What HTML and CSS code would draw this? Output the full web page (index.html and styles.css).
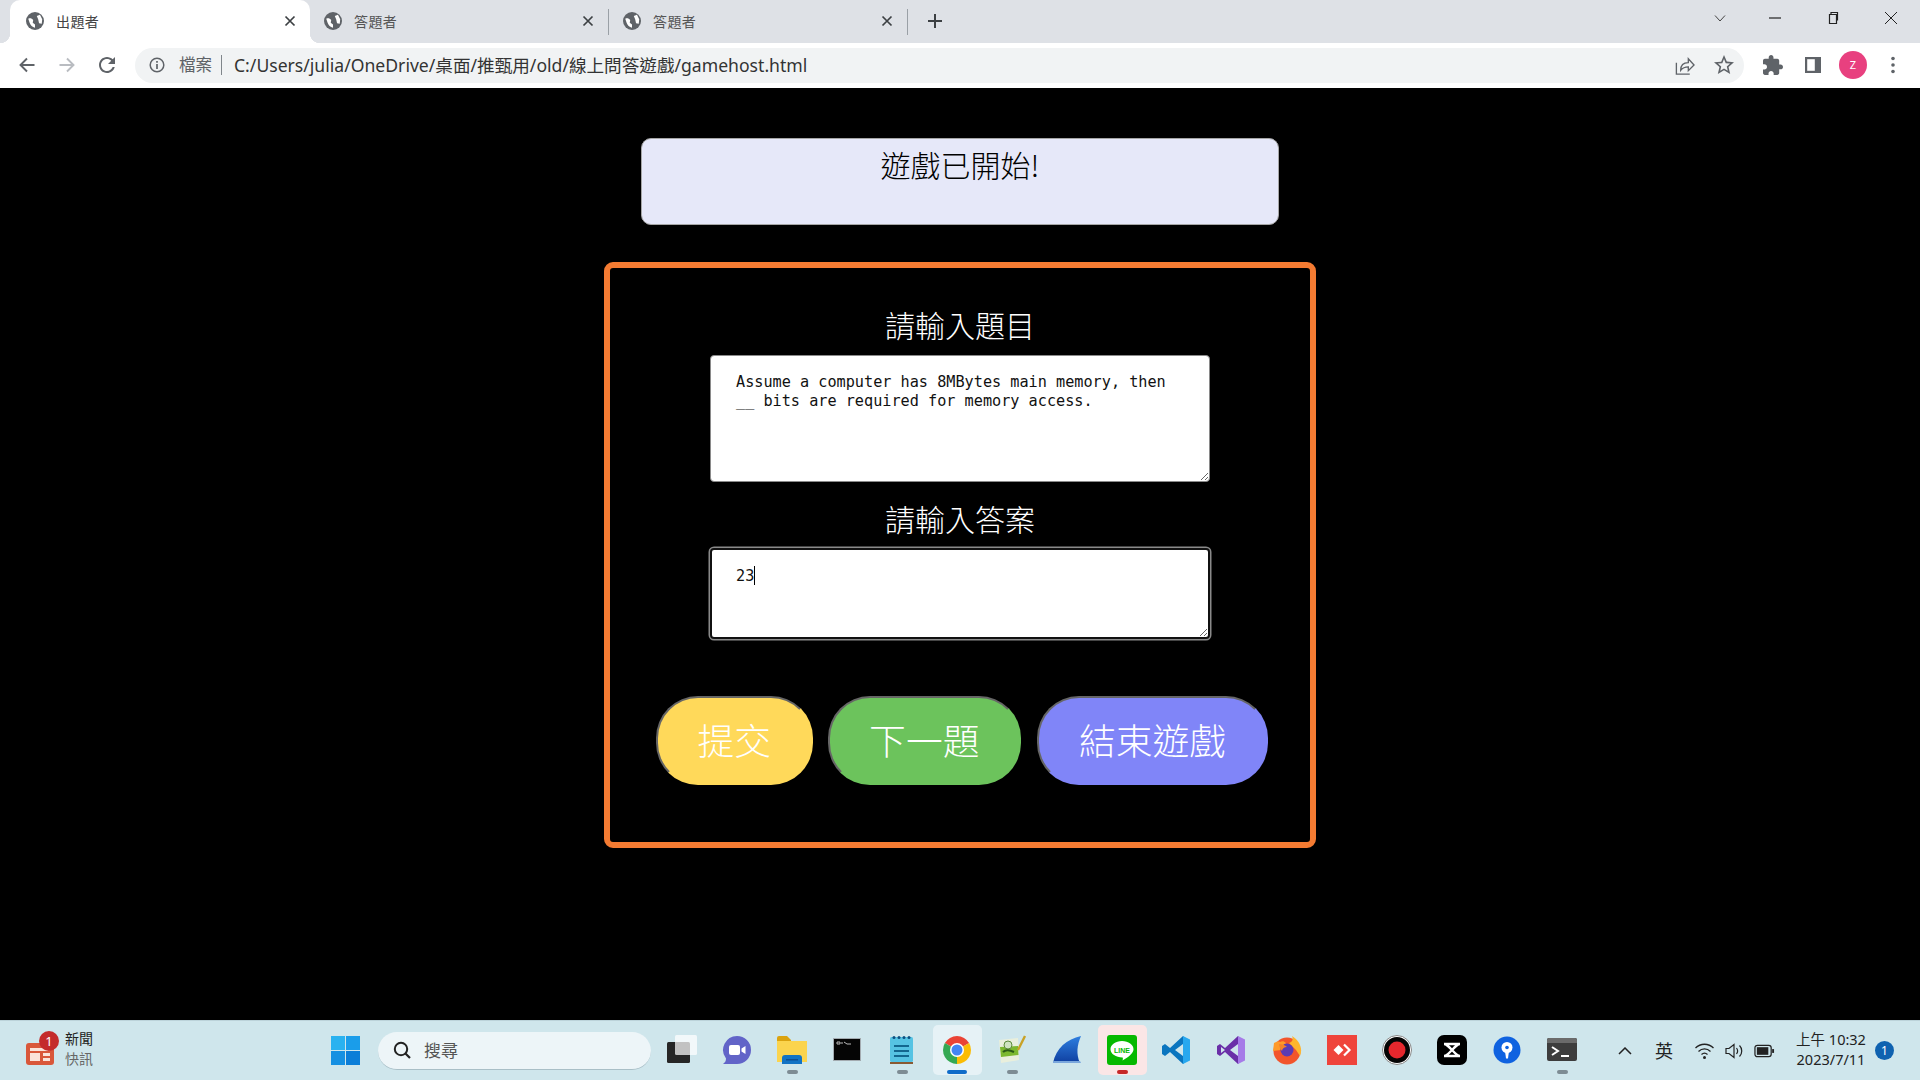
FILE: index.html
```html
<!DOCTYPE html>
<html lang="zh-Hant">
<head>
  <meta charset="UTF-8" />
  <title>出題者</title>
  <link rel="stylesheet" href="styles.css">
</head>
<body>
  <svg class="defs" width="0" height="0">
    <symbol id="globe" viewBox="2 2 20 20">
      <circle cx="12" cy="12" r="10" fill="#5f6368"/>
      <path fill="#fff" d="M4.500 9.500c2-1 4-.5 5.500 1.500l-.5 3 2.500 2v3.500c-3-.5-5-3-6-5.500zM14 6.500l3.500-1.500 2.500 5-.5 5-3-.5-1-4.500z"/>
    </symbol>
    <symbol id="close" viewBox="0 0 12 12">
      <path d="M1.500 1.500l9 9M10.500 1.500l-9 9" fill="none" stroke="#3c4043" stroke-width="1.700"/>
    </symbol>
  </svg>

  <div class="tabstrip">
    <div class="tab active">
      <svg class="favicon"><use href="#globe"/></svg>
      <span class="tab-title">出題者</span>
      <svg class="tab-close"><use href="#close"/></svg>
    </div>
    <div class="tab">
      <svg class="favicon"><use href="#globe"/></svg>
      <span class="tab-title">答題者</span>
      <svg class="tab-close"><use href="#close"/></svg>
    </div>
    <div class="tab-sep"></div>
    <div class="tab">
      <svg class="favicon"><use href="#globe"/></svg>
      <span class="tab-title">答題者</span>
      <svg class="tab-close"><use href="#close"/></svg>
    </div>
    <div class="tab-sep"></div>
    <svg class="new-tab" viewBox="0 0 16 16"><path d="M8 1v14M1 8h14" stroke="#3c4043" stroke-width="2"/></svg>
    <div class="window-controls">
      <div class="win-btn chevron-btn"><svg viewBox="0 0 14 14"><path d="M2 4.500l5 5.500 5-5.500" fill="none" stroke="#444" stroke-width="1"/></svg></div>
      <div class="win-btn"><svg viewBox="0 0 14 14"><path d="M1 7h12" stroke="#222" stroke-width="1.200"/></svg></div>
      <div class="win-btn"><svg viewBox="0 0 14 14"><path d="M3.500 3.500h7v9h-7zM5 3.500V1.500h6.500v8" fill="none" stroke="#222" stroke-width="1.200"/></svg></div>
      <div class="win-btn"><svg viewBox="0 0 14 14"><path d="M1 1l12 12M13 1L1 13" stroke="#222" stroke-width="1"/></svg></div>
    </div>
  </div>

  <div class="toolbar">
    <div class="tool-btn"><svg viewBox="0 0 20 20"><path d="M17.500 10H3.500M10 3.500L3.500 10l6.500 6.500" fill="none" stroke="#5f6368" stroke-width="1.900"/></svg></div>
    <div class="tool-btn"><svg viewBox="0 0 20 20"><path d="M2.500 10h14M10 3.500l6.500 6.500-6.500 6.500" fill="none" stroke="#b9bcc1" stroke-width="1.900"/></svg></div>
    <div class="tool-btn"><svg viewBox="2 2 20 20"><path fill="#5f6368" d="M17.650 6.350C16.200 4.900 14.210 4 12 4c-4.420 0-7.990 3.580-7.990 8s3.570 8 7.990 8c3.730 0 6.840-2.550 7.730-6h-2.080c-.82 2.330-3.040 4-5.650 4-3.310 0-6-2.690-6-6s2.690-6 6-6c1.660 0 3.140.69 4.220 1.780L13 11h7V4l-2.350 2.350z"/></svg></div>
    <div class="address">
      <svg class="info" viewBox="0 0 16 16"><circle cx="8" cy="8" r="6.800" fill="none" stroke="#5f6368" stroke-width="1.500"/><path d="M8 7v5M8 4v1.800" stroke="#5f6368" stroke-width="1.700"/></svg>
      <span class="addr-label">檔案</span>
      <span class="addr-sep"></span>
      <span class="addr-url">C:/Users/julia/OneDrive/桌面/推甄用/old/線上問答遊戲/gamehost.html</span>
      <svg class="addr-icon share" viewBox="0 0 22 22"><path d="M2.500 8v12h14M7 16c0-5 3-8 8-8V4l6 6.500-6 6v-4c-3 0-6 1-8 3.500z" fill="none" stroke="#5f6368" stroke-width="1.400"/></svg>
      <svg class="addr-icon" viewBox="2 2 20 20"><path fill="#5f6368" d="M22 9.240l-7.190-.62L12 2 9.190 8.630 2 9.240l5.460 4.730L5.820 21 12 17.270 18.180 21l-1.630-7.030L22 9.240zM12 15.400l-3.760 2.270 1-4.280-3.320-2.880 4.380-.38L12 6.100l1.710 4.040 4.380.38-3.320 2.880 1 4.280L12 15.400z"/></svg>
    </div>
    <div class="toolbar-right">
      <div class="tool-btn"><svg viewBox="2 1 21 21"><path fill="#5f6368" d="M20.500 11H19V7c0-1.100-.9-2-2-2h-4V3.500C13 2.120 11.880 1 10.500 1S8 2.120 8 3.500V5H4c-1.100 0-1.990.9-1.990 2v3.800H3.500c1.490 0 2.700 1.210 2.700 2.700s-1.210 2.700-2.700 2.700H2V20c0 1.100.9 2 2 2h3.800v-1.500c0-1.490 1.210-2.700 2.700-2.700 1.490 0 2.700 1.210 2.700 2.700V22H17c1.100 0 2-.9 2-2v-4h1.500c1.380 0 2.500-1.120 2.500-2.500S21.880 11 20.500 11z"/></svg></div>
      <div class="tool-btn"><svg viewBox="0 0 20 20"><path fill="#5f6368" d="M2 2h16v16H2z"/><path fill="#fff" d="M4.200 4.200h7.600v11.600H4.200z"/></svg></div>
      <div class="tool-btn"><span class="avatar">Z</span></div>
      <div class="tool-btn"><svg viewBox="0 0 20 20"><circle cx="10" cy="3.500" r="1.800" fill="#5f6368"/><circle cx="10" cy="10" r="1.800" fill="#5f6368"/><circle cx="10" cy="16.500" r="1.800" fill="#5f6368"/></svg></div>
    </div>
  </div>

  <main class="page">
    <div class="banner">遊戲已開始!</div>
    <div class="game-box">
      <label class="field-label" for="question">請輸入題目</label>
      <textarea id="question" class="question">Assume a computer has 8MBytes main memory, then __ bits are required for memory access.</textarea>
      <label class="field-label second" for="answer">請輸入答案</label>
      <div class="answer-wrap">
        <textarea id="answer" class="answer">23</textarea>
        <span class="caret"></span>
      </div>
      <div class="button-row">
        <button class="btn yellow">提交</button>
        <button class="btn green">下一題</button>
        <button class="btn purple">結束遊戲</button>
      </div>
    </div>
  </main>

  <footer class="taskbar">
    <div class="news">
      <div class="news-icon">
        <svg viewBox="0 0 28 22"><rect y="0" width="28" height="22" rx="3" fill="#d9573a"/><path d="M4 5h20v3H4zM4 10h10v8H4zM17 10h7v3h-7zM17 15h7v3h-7z" fill="#fbe3da"/></svg>
        <span class="news-badge">1</span>
      </div>
      <div class="news-text"><span>新聞</span><span class="muted">快訊</span></div>
    </div>
    <svg class="start" viewBox="0 0 29 29"><path fill="#29b2f0" d="M0 0h14v14H0z"/><path fill="#1a9dea" d="M15 0h14v14H15z"/><path fill="#1590e2" d="M0 15h14v14H0z"/><path fill="#0b7ed8" d="M15 15h14v14H15z"/></svg>
    <div class="search">
      <svg viewBox="0 0 18 18"><circle cx="8" cy="8" r="6.200" fill="none" stroke="#222" stroke-width="2"/><path d="M12.500 12.500l4.500 4.500" stroke="#222" stroke-width="2.200"/></svg>
      <span>搜尋</span>
    </div>
    <div class="apps">
      <div class="app"><svg viewBox="0 0 30 30"><rect x="0" y="7" width="23" height="21" rx="1.500" fill="#262626"/><rect x="8" y="0" width="22" height="20" rx="1.500" fill="#fff" opacity=".72"/></svg></div>
      <div class="app"><svg viewBox="0 0 30 30"><path fill="#6264c8" d="M15 1a14 14 0 0 1 0 28H1c2-1.500 3-3 3-5.500A14 14 0 0 1 15 1z"/><rect x="7" y="10" width="11" height="10" rx="2" fill="#fff"/><path d="M19.500 13.500l4-2.500v8l-4-2.500z" fill="#fff"/></svg></div>
      <div class="app"><svg viewBox="0 0 30 30"><path fill="#dba30f" d="M0 3a2 2 0 0 1 2-2h8l4 4v5H0z"/><path fill="#fbd44e" d="M0 6h30v21H0z"/><path fill="#1273c4" d="M5 23a3 3 0 0 1 3-3h14a3 3 0 0 1 3 3v6H5z"/><path fill="#0d4f94" d="M9 24h12v1.500H9z"/></svg></div>
      <div class="app"><svg viewBox="0 0 30 30"><rect x="1" y="3" width="28" height="23" fill="#a3abb0"/><rect x="2" y="4" width="26" height="21" fill="#050505"/><path d="M5 7h3v2H5zM9 8h2M12 7l3 2h4" stroke="#bbb" stroke-width="1" fill="none"/></svg></div>
      <div class="app"><svg viewBox="0 0 30 30"><rect x="3" y="2" width="23" height="25" rx="1.500" fill="#56c3e3"/><path d="M3 27h23v2H3z" fill="#8a5a33"/><path d="M7 10h15v2H7zM7 15h15v2H7zM7 20h15v2H7z" fill="#13678f"/><g fill="#0d4f80"><circle cx="7" cy="2.500" r="1.500"/><circle cx="12" cy="2.500" r="1.500"/><circle cx="17" cy="2.500" r="1.500"/><circle cx="22" cy="2.500" r="1.500"/></g></svg></div>
      <div class="app tile chrome"><svg viewBox="0 0 30 30"><path fill="#ea4335" d="M2.880 8A14 14 0 0 1 27.120 8L15 15z"/><path fill="#fbbc04" d="M27.120 8A14 14 0 0 1 15 29l0-14z"/><path fill="#34a853" d="M15 29A14 14 0 0 1 2.880 8L15 15z"/><circle cx="15" cy="15" r="7" fill="#fff"/><circle cx="15" cy="15" r="5.500" fill="#4285f4"/></svg></div>
      <div class="app"><svg viewBox="0 0 30 30"><path d="M2 5l19-2 1 22-18 3z" fill="#e9efdc"/><path d="M3 12l18-1 .5 9-17.500 2z" fill="#7cb82f"/><circle cx="11" cy="10" r="4" fill="#cfe3c0" stroke="#5c8a3a" stroke-width="1"/><path d="M6 17c3-3 7-2 11 0" stroke="#2b5a15" stroke-width="2" fill="none"/><path d="M28 1l-7 14" stroke="#c9a227" stroke-width="2.400"/></svg></div>
      <div class="app"><svg viewBox="0 0 30 30"><defs><linearGradient id="fin" x1="0" y1="0" x2="0" y2="1"><stop offset="0" stop-color="#2f7fe0"/><stop offset="1" stop-color="#0f3fa0"/></linearGradient></defs><path fill="url(#fin)" d="M29 1C15 4 4 13 1 28h27c-4-9-3-18 1-27z"/><path fill="#7ba7dc" d="M1 26h27l1 2H1z"/></svg></div>
      <div class="app tile line"><svg viewBox="0 0 30 30"><rect width="30" height="30" rx="3" fill="#06b900"/><path fill="#fff" d="M15 6c6.500 0 11.500 3.700 11.500 8.300 0 4-5.500 8.200-11 11.200.5-1.500.5-2.800 0-3C9 22.400 3.500 19 3.500 14.300 3.500 9.700 8.500 6 15 6z"/><text class="line-text" x="15" y="17.500" text-anchor="middle">LINE</text></svg></div>
      <div class="app"><svg viewBox="0 0 30 30"><path fill="#0a75bf" d="M21 1L8 13 3 9l-3 2v8l3 2 5-4 13 12 3-3V5z M21 9v12l-8-6z" fill-rule="evenodd"/><path fill="#28a8ef" d="M21 1l7 3.500v21L21 29z"/></svg></div>
      <div class="app"><svg viewBox="0 0 30 30"><path fill="#6a2fa8" d="M21 1L8 13 3 9l-3 2v8l3 2 5-4 13 12 3-3V5z M21 9v12l-8-6zM4 12l4 3-4 3z" fill-rule="evenodd"/><path fill="#a67be8" d="M21 1l7 3.500v21L21 29z"/></svg></div>
      <div class="app"><svg viewBox="0 0 30 30"><circle cx="15" cy="16" r="13.500" fill="#f2552c"/><path fill="#ffb52e" d="M28 21c3-7 0-15-8-20 2 5-1 6-3 7l7 7z"/><path fill="#ff9a2a" d="M2 8c2-1 4-2 6-1 2-1 4-1 6 1l-5 7-8 1z"/><circle cx="15" cy="15" r="6.500" fill="#5b3bb5"/><path fill="#f5822a" d="M7 9c3 0 6 1 8 3-3 0-5 2-5 4-2-2-3-5-3-7z"/></svg></div>
      <div class="app"><svg viewBox="0 0 30 30"><rect width="30" height="30" fill="#ef443b"/><path fill="#fff" d="M11.500 10l5 5-5 5-5-5z"/><path fill="none" stroke="#fff" stroke-width="2.200" d="M17 9.500l5.500 5.500-5.500 5.500"/></svg></div>
      <div class="app"><svg viewBox="0 0 30 30"><circle cx="15" cy="15" r="14.500" fill="#fff" stroke="#888" stroke-width="1"/><circle cx="15" cy="15" r="13" fill="#050505"/><circle cx="15" cy="15" r="8.500" fill="#e5272d"/></svg></div>
      <div class="app"><svg viewBox="0 0 30 30"><rect width="30" height="30" rx="7" fill="#000"/><path d="M7 9h16M7 21h16M7 9c5 0 11 12 16 12M23 9C18 9 12 21 7 21" fill="none" stroke="#fff" stroke-width="2.400"/></svg></div>
      <div class="app"><svg viewBox="0 0 30 30"><circle cx="15" cy="15" r="13.500" fill="#0f62e0"/><circle cx="15" cy="12.500" r="5.500" fill="#fff"/><path d="M13 16h4l-1 7.500h-2z" fill="#fff"/><circle cx="15" cy="12.500" r="1.800" fill="#0f62e0"/></svg></div>
      <div class="app"><svg viewBox="0 0 30 26"><rect width="30" height="23" y="1" rx="2" fill="#3d3d3d"/><path d="M0 3a2 2 0 0 1 2-2h26a2 2 0 0 1 2 2v3H0z" fill="#6b6b6b"/><path d="M5 10l6 4-6 4" fill="none" stroke="#fff" stroke-width="2"/><path d="M14 18h8v2h-8z" fill="#fff"/></svg></div>
    </div>
    <div class="tray">
      <svg class="tray-chevron" viewBox="0 0 14 8"><path d="M1 7l6-6 6 6" fill="none" stroke="#222" stroke-width="1.500"/></svg>
      <span class="ime">英</span>
      <svg class="tray-icon" viewBox="0 0 20 18"><path d="M1 6c5-5 13-5 18 0M4 9.500c3.500-3.500 8.500-3.500 12 0M7 12.500c2-1.800 4-1.800 6 0" fill="none" stroke="#222" stroke-width="1.300"/><circle cx="10" cy="15.500" r="1.500" fill="#222"/></svg>
      <svg class="tray-icon" viewBox="0 0 20 18"><path d="M1.500 6.500h3l5-4v13l-5-4h-3z" fill="none" stroke="#222" stroke-width="1.200"/><path d="M12 6c1.500 2 1.500 4 0 6M15 3.500c3 3 3 8 0 11" fill="none" stroke="#222" stroke-width="1.200"/></svg>
      <svg class="tray-icon" viewBox="0 0 22 14"><rect x="1" y="1" width="17" height="12" rx="2.500" fill="none" stroke="#222" stroke-width="1.300"/><rect x="3" y="3" width="12" height="8" fill="#222"/><path d="M19 5h2v4h-2z" fill="#222"/></svg>
      <div class="clock"><span>上午 10:32</span><span>2023/7/11</span></div>
      <span class="notify">1</span>
    </div>
  </footer>
</body>
</html>
```

FILE: styles.css
```css
* {
  box-sizing: border-box;
}
body {
  margin: 0;
  width: 1920px;
  height: 1080px;
  display: flex;
  flex-direction: column;
  overflow: hidden;
  background: #000;
  font-family: "Noto Sans", "Noto Sans CJK TC", sans-serif;
}
.defs {
  position: absolute;
}

/* browser tabs */
.tabstrip {
  height: 43px;
  flex: none;
  display: flex;
  align-items: center;
  padding-left: 10px;
  background: #dee1e6;
}
.tab {
  width: 298px;
  height: 43px;
  flex: none;
  display: flex;
  align-items: center;
  gap: 12px;
  padding: 0 14px 2px 14px;
  color: #555;
  font-size: 14px;
}
.tab.active {
  position: relative;
  width: 300px;
  padding-left: 16px;
  padding-right: 14px;
  background: #fff;
  border-radius: 10px 10px 0 0;
  color: #444;
}
.tab.active::before,
.tab.active::after {
  content: "";
  position: absolute;
  bottom: 0;
  width: 10px;
  height: 10px;
}
.tab.active::before {
  left: -10px;
  background: radial-gradient(circle at 0 0, transparent 10px, #fff 10.500px);
}
.tab.active::after {
  right: -10px;
  background: radial-gradient(circle at 100% 0, transparent 10px, #fff 10.500px);
}
.favicon {
  width: 18px;
  height: 18px;
  flex: none;
}
.tab-title {
  flex: 1;
  letter-spacing: .4px;
}
.tab-close {
  width: 12px;
  height: 12px;
  flex: none;
}
.tab-sep {
  width: 1px;
  height: 26px;
  flex: none;
  background: #9aa0a6;
}
.new-tab {
  width: 16px;
  height: 16px;
  margin: 0 0 2px 19px;
}
.window-controls {
  margin-left: auto;
  align-self: flex-start;
  display: flex;
}
.win-btn {
  width: 58px;
  height: 36px;
  display: flex;
  align-items: center;
  justify-content: center;
}
.chevron-btn {
  padding-left: 5px;
}
.win-btn svg {
  width: 14px;
  height: 14px;
}

/* address bar */
.toolbar {
  height: 45px;
  flex: none;
  display: flex;
  align-items: center;
  padding: 0 7px 1px 7px;
  background: #fff;
}
.tool-btn {
  width: 40px;
  height: 36px;
  flex: none;
  display: flex;
  align-items: center;
  justify-content: center;
}
.tool-btn svg {
  width: 20px;
  height: 20px;
}
.address {
  flex: 1;
  height: 35px;
  margin-left: 8px;
  display: flex;
  align-items: center;
  padding: 0 10px 0 14px;
  background: #f1f3f4;
  border-radius: 18px;
}
.info {
  width: 16px;
  height: 16px;
  flex: none;
}
.addr-label {
  margin-left: 14px;
  padding-bottom: 2px;
  font-size: 16.500px;
  color: #5f6368;
}
.addr-sep {
  width: 1px;
  height: 20px;
  margin: 0 12px 0 9px;
  background: #80868b;
}
.addr-url {
  flex: 1;
  padding-bottom: 2px;
  font-size: 17.600px;
  color: #333;
}
.addr-icon {
  width: 20px;
  height: 20px;
  flex: none;
}
.share {
  width: 21px;
  height: 21px;
  margin-right: 19px;
}
.toolbar-right {
  display: flex;
  margin-left: 9px;
}
.avatar {
  width: 28px;
  height: 28px;
  border-radius: 50%;
  background: #e8407f;
  color: #fff;
  font-size: 11px;
  line-height: 28px;
  text-align: center;
}

/* game page */
.page {
  flex: 1;
  display: flex;
  flex-direction: column;
  align-items: center;
  padding-top: 50px;
  background: #000;
  font-family: "Noto Sans CJK TC", sans-serif;
  font-weight: 300;
}
.banner {
  width: 638px;
  height: 87px;
  padding-top: 4px;
  background: #e6e8f9;
  border: 1px solid #a6a6a6;
  border-radius: 10px;
  color: #000;
  font-size: 30px;
  line-height: 42px;
  text-align: center;
}
.game-box {
  width: 712px;
  height: 586px;
  margin-top: 37px;
  display: flex;
  flex-direction: column;
  align-items: center;
  padding-top: 35px;
  border: 6px solid #f47b32;
  border-radius: 9px;
}
.field-label {
  height: 42px;
  margin-bottom: 10px;
  color: #fff;
  font-size: 30px;
  line-height: 42px;
}
.field-label.second {
  margin-top: 15px;
  margin-bottom: 9px;
}
textarea {
  display: block;
  width: 500px;
  padding: 17px 25px;
  background: #fff;
  border: 1px solid #8a8a8a;
  border-radius: 4px;
  color: #111;
  font-family: "DejaVu Sans Mono", monospace;
  font-size: 15.200px;
  line-height: 19px;
  outline: none;
}
.question {
  height: 127px;
}
.answer-wrap {
  position: relative;
}
.answer {
  height: 91px;
  border: 2px solid #111;
  box-shadow: 0 0 0 1.500px #8a8a8a;
  padding: 17px 24px;
}
.caret {
  position: absolute;
  left: 44px;
  top: 18px;
  width: 1px;
  height: 19px;
  background: #000;
}
.button-row {
  display: flex;
  align-self: flex-start;
  gap: 16px;
  margin: 57px 0 0 46px;
}
.btn {
  height: 89px;
  padding: 0 39.500px 4px;
  border: 2px solid;
  border-color: #666 transparent transparent #666;
  border-radius: 42px;
  color: #fff;
  font-family: inherit;
  font-weight: 300;
  font-size: 36.800px;
}
.yellow {
  background: #ffd95a;
}
.green {
  margin-left: -1px;
  background: #6cc35c;
}
.purple {
  padding: 0 40px 4px;
  background: #8085f8;
}

/* windows taskbar */
.taskbar {
  height: 60px;
  flex: none;
  display: flex;
  align-items: center;
  background: #cfe6ec;
  border-top: 1px solid #bcd3da;
  font-family: "Noto Sans", "Noto Sans CJK TC", sans-serif;
}
.news {
  width: 331px;
  display: flex;
  align-items: center;
  padding-left: 26px;
  gap: 11px;
}
.news-icon {
  position: relative;
  width: 28px;
  height: 22px;
  margin-top: 6px;
}
.news-icon svg {
  display: block;
}
.news-badge {
  position: absolute;
  left: 13px;
  top: -12px;
  width: 20px;
  height: 20px;
  border-radius: 50%;
  background: #c42b2b;
  color: #fff;
  font-size: 13px;
  line-height: 20px;
  text-align: center;
}
.news-text {
  display: flex;
  flex-direction: column;
  margin-bottom: 4px;
  font-size: 14px;
  line-height: 20px;
  color: #222;
}
.muted {
  color: #666;
}
.start {
  width: 29px;
  height: 29px;
  flex: none;
}
.search {
  width: 273px;
  height: 38px;
  flex: none;
  margin-left: 18px;
  display: flex;
  align-items: center;
  gap: 13px;
  padding-left: 15px;
  background: #edf5f8;
  border-bottom: 1px solid #a9bfc7;
  border-radius: 19px;
  color: #555;
  font-size: 17px;
}
.search svg {
  width: 18px;
  height: 18px;
}
.search span {
  padding-bottom: 2px;
}
.apps {
  display: flex;
  margin-left: 3.500px;
}
.app {
  position: relative;
  width: 55px;
  height: 59px;
  padding-bottom: 2px;
  display: flex;
  align-items: center;
  justify-content: center;
}
.app svg {
  width: 30px;
  height: 30px;
}
.app:nth-child(3)::after,
.app:nth-child(5)::after,
.app:nth-child(7)::after,
.app:nth-child(17)::after {
  content: "";
  position: absolute;
  left: 22px;
  bottom: 6px;
  width: 11px;
  height: 4px;
  border-radius: 2px;
  background: #7d8c94;
}
.tile::before {
  content: "";
  position: absolute;
  left: 3px;
  top: 4px;
  width: 49px;
  height: 50px;
  border-radius: 5px;
}
.tile svg {
  position: relative;
}
.chrome::before {
  background: #e6f2f6;
}
.chrome::after {
  content: "";
  position: absolute;
  left: 17px;
  bottom: 6px;
  width: 20px;
  height: 4px;
  border-radius: 2px;
  background: #0f6cc9;
}
.line::before {
  background: #fbe6e6;
}
.line::after {
  content: "";
  position: absolute;
  left: 22px;
  bottom: 6px;
  width: 11px;
  height: 4px;
  border-radius: 2px;
  background: #c62828;
}
.line-text {
  font-family: "Liberation Sans", sans-serif;
  font-size: 7px;
  font-weight: 700;
  fill: #06b900;
}
.tray {
  flex: 1;
  display: flex;
  align-items: center;
  color: #222;
}
.tray-chevron {
  width: 14px;
  height: 8px;
  margin-left: 28.500px;
}
.ime {
  margin-left: 23px;
  padding-bottom: 2px;
  font-size: 18px;
}
.tray-icon {
  width: 21px;
  height: 18px;
  margin-left: 9px;
}
.ime + .tray-icon {
  margin-left: 21px;
}
.clock {
  width: 78px;
  margin: 0 0 4px 17px;
  display: flex;
  flex-direction: column;
  align-items: center;
  font-size: 14.500px;
  line-height: 20px;
}
.notify {
  width: 19px;
  height: 19px;
  margin-left: 5px;
  border-radius: 50%;
  background: #0f62b0;
  color: #fff;
  font-size: 12px;
  line-height: 19px;
  text-align: center;
}
```
